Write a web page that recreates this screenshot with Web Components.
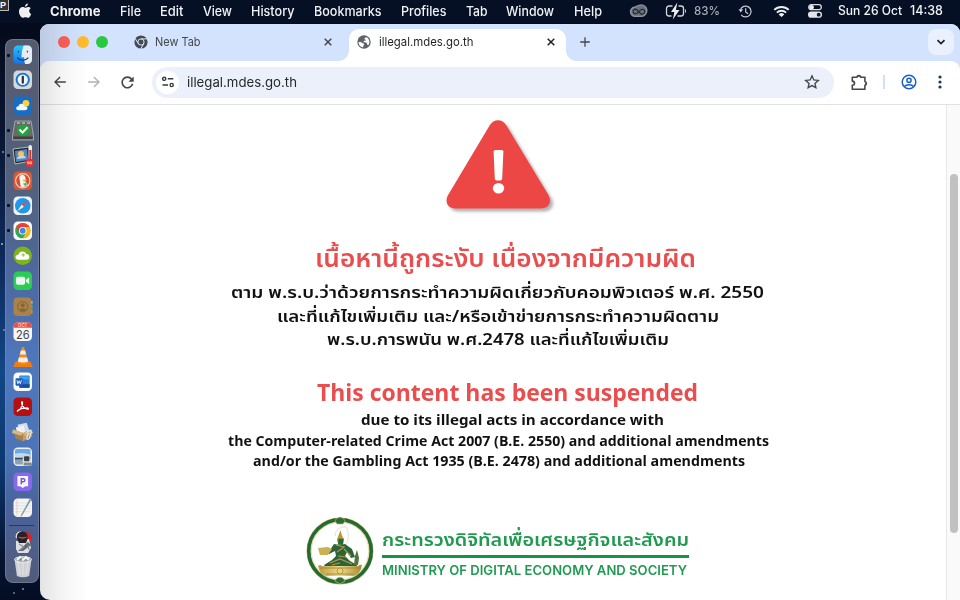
<!DOCTYPE html>
<html lang="en">
<head>
<meta charset="utf-8">
<title>illegal.mdes.go.th</title>
<style>
html,body{margin:0;height:600px;overflow:hidden}
body{font-family:Inter,"Liberation Sans",sans-serif;background:#030b1f}
</style>
</head>
<body>
<desktop-screen></desktop-screen>
<script>
const define=(name,html,setup)=>{
  customElements.define(name,class extends HTMLElement{
    constructor(){
      super();
      const t=document.createElement('template');
      t.innerHTML=html;
      this.attachShadow({mode:'open'}).append(t.content.cloneNode(true));
    }
    connectedCallback(){ if(setup) setup.call(this,this.shadowRoot); }
  });
};

/* Single line of text, condensed or widened to the width in its "w" attribute */
define('fit-text',`<style>
:host{display:block;flex:none;white-space:nowrap}
span{display:inline-block;transform-origin:0 50%;white-space:nowrap}
</style><span><slot></slot></span>`,function(r){
  const w=+this.getAttribute('w'), s=r.querySelector('span');
  this.style.width=w+'px';
  s.style.transform='none';
  const n=s.getBoundingClientRect().width;
  if(n) s.style.transform='scaleX('+(w/n)+')';
});

const tile=(fill)=>`<rect x=".5" y=".5" width="19" height="19" rx="4.4" fill="${fill}"/>`;
const ICONS={
apple:['0 0 14 17','<path fill="#eee" d="M9.9.5c.1 1.6-1.3 3.2-2.9 3.3C6.900 2.200 8.300.7 9.900.5zM7.200 4.700c.8 0 1.700-.8 3-.8 1 0 2 .5 2.600 1.400-2.300 1.400-1.900 4.600.4 5.600-.6 1.700-1.700 3.900-3.100 3.900-1 0-1.400-.6-2.600-.6-1.200 0-1.700.6-2.600.6C3 14.800 1 11.600 1 8.600 1 5.600 2.800 4 4.600 4c1.100 0 1.900.7 2.600.7z"/>'],
cc:['0 0 20 16','<g fill="none" stroke="#8d929b" stroke-width="1.500"><path d="M10.500 1.500a6 6 0 0 1 7.900 7.700c-1 3-3 4-5.500 4H6a5 5 0 0 1-3-8.500c1.300-1.200 2.400-1.300 3.500-1.200A6 6 0 0 1 10.500 1.500z" fill="#6a7079"/><path stroke="#1b2335" stroke-width="1.100" d="M13 11 8.200 6.300C6 4.300 3.300 6.500 4.500 9c1 2 3.300 1.500 4.500.5l3-2.900C15 4 18 7 16 9.800c-1.400 1.500-3 1.200-4 .2L7.500 5.700"/></g>'],
battery:['0 0 22 18','<path d="M7.500 4H4a2.500 2.500 0 0 0-2.500 2.500v5A2.500 2.500 0 0 0 4 14h2.500M13.500 4H16a2.500 2.500 0 0 1 2.500 2.500v5A2.500 2.500 0 0 1 16 14h-3.500" fill="none" stroke="#d5d7db" stroke-width="1.300"/><path d="M20 7v4c1.300-.4 1.300-3.600 0-4z" fill="#d5d7db"/><path d="M12.300.5 6 10h3.400L7.800 17.500 14.500 8h-3.600z" fill="#eee"/>'],
time:['0 0 16 16','<g fill="none" stroke="#c7cad0" stroke-width="1.300"><path d="M2.700 6A5.800 5.800 0 1 1 3.500 11.500M8.200 4.500V8.500l2.500 2"/></g><path d="M.5 5.500h5L3 9z" fill="#c7cad0"/>'],
wifi:['0 0 18 14','<g fill="none" stroke="#eee" stroke-width="2"><path d="M1.200 5.300a11.200 11.200 0 0 1 15.600 0M4 8.200a7.200 7.200 0 0 1 10 0"/></g><path d="M9 13 6 10.100a4.400 4.400 0 0 1 6 0z" fill="#eee"/>'],
control:['0 0 14 14','<rect x=".7" y=".7" width="12.600" height="5" rx="2.500" fill="none" stroke="#d9dbdf" stroke-width="1.300"/><circle cx="3.600" cy="3.200" r="2.300" fill="#eee"/><rect x="0" y="7.500" width="14" height="6.300" rx="3.100" fill="#e4e5e8"/><circle cx="10.700" cy="10.650" r="1.900" fill="#071127"/>'],
chromegrey:['0 0 14 14','<circle cx="7" cy="7" r="6.600" fill="#474a50"/><g stroke="#d3e3fd" stroke-width="1" fill="none"><circle cx="7" cy="7" r="3.100"/><path d="M7 3.900h6.500M4.200 8.600 1 3.100M9.800 8.600 6.700 14"/></g><circle cx="7" cy="7" r="1.800" fill="#474a50"/>'],
globe:['0 0 14 14','<circle cx="7" cy="7" r="6.700" fill="#5f6368"/><path fill="#fff" d="M1.500 7c1.300-.2 3.200.1 3.800 1 .4.700 1.700.3 1.900 1.300.1 1-1 1.200-1 2.100v1A5.600 5.600 0 0 1 1.500 7zM9.200 1.900c-.1.900-1.600.8-1.800 1.500-.2.900 1.500 1 1.300 1.900-.1.800-2 .3-2.200 1.300-.1.900 1.300.8 2.500.8 1 0 1 1.200 1.200 2.100l1 .9A5.500 5.500 0 0 0 9.200 1.900z"/>'],
x:['0 0 10 10','<path d="m1.700 1.700 6.600 6.600m0-6.600-6.600 6.600" stroke="currentColor" stroke-width="1.500" fill="none"/>'],
plus:['0 0 10 10','<path d="M5 .2v9.600M.2 5h9.600" stroke="#44474c" stroke-width="1.300"/>'],
chev:['0 0 10 10','<path d="m1.500 3.200 3.500 3.300 3.500-3.300" stroke="#202124" stroke-width="1.700" fill="none"/>'],
back:['0 0 12 12','<path d="M11.800 6H1M6.100.9 1 6l5.100 5.100" stroke="currentColor" stroke-width="1.400" fill="none"/>'],
reload:['0 0 12 12','<path d="M10.700 7.100A4.900 4.900 0 1 1 9.800 2.900L11 4.300" stroke="#44474c" stroke-width="1.500" fill="none"/><path d="M11.700.4v4.800H6.900z" fill="#44474c"/>'],
tune:['0 0 14 12','<g fill="none" stroke="#36393e" stroke-width="1.400"><circle cx="3.200" cy="2.800" r="1.600"/><path d="M6.800 2.800h5.500M1.500 9h5.500"/><circle cx="10.700" cy="9" r="1.600"/></g>'],
star:['0 0 14 14','<path d="m7 1.600 1.600 3.600 3.900.4-2.900 2.600.8 3.800L7 10.100 3.600 12l.8-3.800-2.900-2.600 3.900-.4z" fill="none" stroke="#44474c" stroke-width="1.200"/>'],
puzzle:['0 0 16 16','<path d="M1.200 3.100h4.500a1.700 1.700 0 0 1 3.400 0h4v4a1.800 1.800 0 0 1 0 3.500v3.800H1.200v-3.800c2.800-.3 2.800-3.600 0-3.900z" fill="none" stroke="#44474c" stroke-width="1.500" stroke-linejoin="round"/><path d="M5.900 2.500a1.600 1.600 0 0 1 3 0zM13.500 7.500a1.500 1.500 0 0 1 0 2.800z" fill="#44474c"/>'],
user:['0 0 16 16','<g fill="none" stroke="#1a5fd0" stroke-width="1.500"><circle cx="8" cy="8" r="6.800"/><circle cx="8" cy="6.300" r="2.100"/><path d="M3.300 12.500c2.100-2.400 7.300-2.400 9.400 0"/></g>'],
more:['0 0 4 14','<g fill="#1c3764"><circle cx="2" cy="2" r="1.600"/><circle cx="2" cy="7" r="1.600"/><circle cx="2" cy="12" r="1.600"/></g>'],
warn:['0 0 116 100','<defs><filter id="s" x="-20%" y="-20%" width="150%" height="150%"><feDropShadow dx="3" dy="3" stdDeviation="1.800" flood-color="#555" flood-opacity=".45"/></filter></defs><path filter="url(#s)" fill="#ec4645" d="M45.600 8.500c4-7 12.800-7 16.800 0l41.700 69c4.300 7 .8 14-7 14H11.400c-7.800 0-11.300-7-7-14z"/><path fill="#fff" d="M49.600 34.500q.1-1.500 1.600-1.500h6.600q1.500 0 1.600 1.500l-1.200 27q-.1 1.900-1.900 1.900h-3.600q-1.800 0-1.900-1.900z"/><ellipse cx="54.500" cy="71.300" rx="5.700" ry="5.300" fill="#fff"/>'],
seal:['0 0 68 68','<defs><linearGradient id="g" x1="0" x2="1"><stop stop-color="#b89b3f"/><stop offset=".5" stop-color="#f0dc87"/><stop offset="1" stop-color="#a78a35"/></linearGradient></defs><circle cx="34" cy="34" r="31.300" fill="#fff" stroke="#cdbb73" stroke-width="4.400"/><circle cx="34" cy="34" r="31.300" fill="none" stroke="#226b35" stroke-width="3.500"/><circle cx="34" cy="34" r="28.700" fill="none" stroke="#d5c98f" stroke-width=".6"/><path d="M29 4c1-3 3-3 5-4 2 1 4 1 5 4l-2 3h-6z" fill="#2c6d35" stroke="#cdbb73" stroke-width=".6"/><path d="M29 64c2-5 8-5 10 0l-5 3z" fill="#286c35" stroke="#cdbb73" stroke-width=".7"/><path d="M29 19c0-6 6-10 11-9 3 5 3 12 0 18" fill="none" stroke="#d7d5c8" stroke-width=".8"/><path d="m34.500 13 1.600 6 2 3-1 5-4.500 1-1.800-5z" fill="#b69a3b"/><path d="m32.500 21.500 5 .5-.5 6-5-.5z" fill="#28683b"/><path d="m28 27 6 1 5-1 7 5 3 8-4 1-4-6-2 4 5 5 7 4-2 4H21l-3-4 8-5 4-4-1-5-6 3-5-2 6-2z" fill="#2b643b"/><path d="m12 31 10-1 4 2-4 6h-8z" fill="#ccb054"/><path d="m30 28 8 2-7 5m1 4 8 1m-16 6 10-4 12 5m-20 1 8-2m4-14 7 7" stroke="#b3983f" stroke-width="1.200" fill="none"/><path d="M12 49q2-2 4 0l36 0q2-2 4-1l-1 4q-3 6-7 7H20q-5-1-7-7z" fill="url(#g)"/><path d="m14 51 40 0M20 57h28" stroke="#9e8230" stroke-width=".8"/><circle cx="34" cy="54" r="3" fill="#ead57c" stroke="#9e8230" stroke-width=".7"/><path d="m49 39 2-6 2 8-1 7h-4z" fill="#56713b"/>'],
finder:['0 0 20 20','<defs><linearGradient id="f" y2="1" x2="0"><stop stop-color="#25c4fb"/><stop offset="1" stop-color="#1570ee"/></linearGradient></defs>'+tile('url(#f)')+'<path d="M11 .5h4.100a4.400 4.400 0 0 1 4.400 4.400v10.200a4.400 4.400 0 0 1-4.400 4.400H12.400c-.7-2-.9-4-.9-7H8.700C8.700 8 9.500 4 11 .5z" fill="#e6edf5"/><path d="M4.300 13c3 3.600 8.500 3.600 11.500 0M5.500 5.800v2M14.700 5.800v2" stroke="#17375e" fill="none" stroke-width="1.100"/>'],
onepass:['0 0 20 20',tile('#d8d8d6')+'<circle cx="10" cy="10" r="6.300" fill="#f3f5f6" stroke="#1977cc" stroke-width="2"/><rect x="8.900" y="6" width="2.300" height="8" rx=".8" fill="#263443"/>'],
weather:['0 0 20 20',tile('#166dc5')+'<circle cx="13.300" cy="7.500" r="3.500" fill="#ffd13a"/><path d="M5.500 14.500c-3 0-3-4 .2-4 .6-3.400 5-3.400 6 0 4-.5 4 4 .8 4z" fill="#f3f8fd"/>'],
seo:['0 0 22 22','<path d="M3 2h16l2.500 15v4h-21v-4z" fill="#686a68" stroke="#bfc1ba" stroke-width=".7"/><rect x="1.200" y="17.500" width="19.500" height="2.500" fill="#40413f"/><path d="M5 4h3m2 0h3m2 0h3" stroke="#ddd" stroke-width="1.200"/><ellipse cx="11.300" cy="11" rx="6.500" ry="5.800" fill="#22a43d"/><path d="m7.500 10.500 3 3 5-5.300" fill="none" stroke="#fff" stroke-width="2"/>'],
temp:['0 0 22 22','<path d="m1 4 16-2 2 14-16 3z" fill="#202833" stroke="#b9b9b5" stroke-width="1"/><path d="m3 6 12-2 1 11-12 2z" fill="#5686c0"/><circle cx="9" cy="9" r="3" fill="#f5c34e"/><path d="M5 14c0-4 8-5 9-1z" fill="#ccd6e2"/><rect x="16.500" width="3.500" height="16" rx="1.700" fill="#eee"/><path d="M18.300 5v12" stroke="#e12d28" stroke-width="2"/><circle cx="17.800" cy="17.800" r="4.200" fill="#eb302c"/><path d="M15.600 16.800v2h1.500v-2zM18 16.800v2h1.500v-2z" fill="none" stroke="#fff" stroke-width=".6"/>'],
duck:['0 0 20 20',tile('#dc5734')+'<circle cx="10" cy="10" r="7.300" fill="#d84d2b" stroke="#f3d4ca" stroke-width="1.100"/><path d="M8 17 6.500 7C6.500 2.500 13 3 13 8l-.5 3c2.500 1 2.500 3 2 4.500z" fill="#f5f4ef"/><path d="m10 8.500 5 .7-4 2z" fill="#f7b82e"/><path d="m10 13 4-1-.3 4z" fill="#4da65a"/>'],
safari:['0 0 20 20',tile('#eff3f6')+'<circle cx="10" cy="10" r="8" fill="#2396e9"/><path d="m15.700 4.300-4.600 6.800-2.200-2.200z" fill="#e84c43"/><path d="m4.300 15.700 4.600-6.800 2.200 2.200z" fill="#f7f7f7"/>'],
chrome:['0 0 20 20',tile('#f8f8f8')+'<circle cx="10" cy="10" r="7.800" fill="#33a852"/><path d="M10 10 3.200 6.100A7.800 7.800 0 0 1 16.800 6.100z" fill="#ea4335"/><path d="M10 6.100h6.800A7.800 7.800 0 0 1 10 17.800l3.400-5.800z" fill="#fbbc05"/><path d="m3.200 6.100 3.500 6L10 10V6z" fill="#ea4335"/><circle cx="10" cy="10" r="3.900" fill="#fff"/><circle cx="10" cy="10" r="3" fill="#4285f4"/>'],
cloud:['0 0 20 20','<circle cx="10" cy="10" r="9.500" fill="#79b51b"/><path d="M5.500 14c-4 0-3.700-5 0-5 1-4 6.500-4.400 8-.8 4-.5 4.600 5.800.5 5.800z" fill="#fff"/><path d="M10.500 7.500v3.500M8.700 9.200h3.600" stroke="#79b51b" stroke-width=".8"/>'],
facetime:['0 0 20 20',tile('#2ccb55')+'<rect x="3" y="6" width="9.500" height="8" rx="2" fill="#eafaee"/><path d="m13.300 9 3.300-2.500v7L13.300 11z" fill="#eafaee"/>'],
contacts:['0 0 20 20','<path d="M18 4h2v3h-2z" fill="#d8c56c"/><path d="M18 8h2v4h-2z" fill="#5fb069"/><path d="M18 13h2v4h-2z" fill="#e28b4a"/><rect x=".5" y=".5" width="18.500" height="19" rx="4" fill="#a9824c"/><circle cx="10" cy="10" r="5.300" fill="none" stroke="#876435" stroke-width="1"/><circle cx="10" cy="8.500" r="2" fill="#876435"/><path d="M6.500 13q3.500-3 7 0-3 3-7 0z" fill="#876435"/>'],
calendar:['0 0 20 20',tile('#f7f7f7')+'<path d="M.5 6V4.900A4.400 4.400 0 0 1 4.900.5h10.200a4.400 4.400 0 0 1 4.400 4.400V6z" fill="#ed4b43"/><text x="10" y="5" text-anchor="middle" font-size="4.500" fill="#fff" font-family="Inter">OCT</text><text x="10" y="17" text-anchor="middle" font-size="12" fill="#444" font-family="Inter" textLength="14" lengthAdjust="spacingAndGlyphs">26</text>'],
vlc:['0 0 20 22','<path d="m2.500 15.500 15 0 2.200 5.500H.3z" fill="#ef7d0c"/><path d="M9 1h2l4.700 16q-5.700 3-11.400 0z" fill="#fa8b12"/><path d="m7.900 4.500h4.200l1.100 4H6.800zM5.900 11.500h8.200l1.100 4q-5 2-10.400 0z" fill="#eee"/>'],
word:['0 0 20 20',tile('#fafafa')+'<rect x="6.500" y="3.500" width="10.500" height="13" rx="1" fill="#2c7cd5"/><path d="M6.500 4.500h10.500v3H6.500z" fill="#41a5ee"/><path d="M6.500 12.500h10.500v3.500H6.500z" fill="#174b98"/><rect x="2.600" y="6.500" width="7.500" height="7.500" rx=".8" fill="#1b5fbb"/><path d="m4 8.500 1 3.500 1.300-3 1.200 3L8.700 8.500" fill="none" stroke="#fff" stroke-width=".9"/>'],
acrobat:['0 0 20 20',tile('#b60f12')+'<path d="M4.600 14.500c2.500-.8 5.600-5.500 5.200-8.600-.1-1.700-1.300-1.200-1 .3.500 3 3.100 6 5.800 6.300 2.300.1 1.300-1.600-.9-1.400-3.500.1-7 1.200-9 2.700z" fill="none" stroke="#fff" stroke-width="1.200"/>'],
box:['0 0 24 22','<path d="m6 3 10-2 3 9-10 3z" fill="#cfe0ed"/><path d="m4 6 9-2 1 8-8 1z" fill="#f0f2f1"/><path d="m1 8 11 4v9L4 18z" fill="#a8814c"/><path d="m12 12 9-4 1 8-10 5z" fill="#c4a069"/><path d="m1 8-1 4 10 3 2-3zM12 12l9-4 2 4-8 4z" fill="#d3b784"/><path d="M16 12q4-5 5-1l-2 7q-2 2-3 0l2-6" fill="none" stroke="#e6eaed" stroke-width="1.200"/>'],
preview:['0 0 20 20',tile('#edf1f4')+'<path d="M2 4q0-2 2-2h12q2 0 2 2v8H2z" fill="#6daae4"/><path d="M2 7q8-2 16 1v4H2z" fill="#c5d9ec"/><path d="M2 11h16v2H2z" fill="#34455f"/><path d="M2 13h9v5H4q-2 0-2-2z" fill="#8fa0b4"/><path d="M10 11h8l1 8h-9z" fill="#dce0df"/><rect x="11.300" y="9.500" width="5.500" height="5" rx="1" fill="#3c3f42"/><path d="M11 16h8v3h-8z" fill="#868a8c"/>'],
pock:['0 0 20 20',tile('#8669ed')+'<path d="M4.500 4h11v10.500h-2.800L10 16.500l-2.700-2H4.500z" fill="#f7f5ff"/><path d="M8.500 12.500V7h2.200q1.500.2 1.500 1.500t-1.500 1.600H8.500" fill="none" stroke="#7257d8" stroke-width="1.500"/>'],
textedit:['0 0 20 20',tile('#f4f4f1')+'<path d="M2 5h16M2 8h16M2 11h16M2 14h16" stroke="#d5dbe1" stroke-width=".7"/><path d="M4 2v16" stroke="#edb6b5" stroke-width=".6"/><path d="M17.500.5 8.300 17.500l-.5 1.500 1.400-.9L18.800 1.500z" fill="#69808e" stroke="#b8c9d1" stroke-width=".5"/>'],
robot:['0 0 20 22','<ellipse cx="12" cy="7" rx="7" ry="6.500" fill="#d72525"/><path d="m3 10 13-2 2 9-3 5H5l-2-4z" fill="#dddfe1"/><path d="M2.500 6Q3 0 8 .5l1 1L5 9z" fill="#e8e8ea"/><path d="M4 8q-1-7 5-7.500Q15 0 14.500 8L13 12H6z" fill="#232329"/><path d="M5.500 6q4 2 8 0" stroke="#e24a45" stroke-width="1.300" fill="none"/><path d="m5 20 10-9 3 3-8 6z" fill="#61656c"/><path d="m6 13 5 3-4 3m8-5 1 5" stroke="#888d95" stroke-width="1.200" fill="none"/>'],
trash:['0 0 20 22','<path d="M1.500 3h17L16.200 20q-6 2.500-12.300 0z" fill="#cfd1d4"/><path d="M5 6l2 13m3-12v12m5-13-2 13" stroke="#dfe1e3" stroke-width="1.200"/><ellipse cx="10" cy="3.500" rx="8.500" ry="2.800" fill="#9b9fa3" stroke="#edf0f1" stroke-width="1"/><path d="m4 4 3-3 3 3 3-3 3 3" stroke="#f5f6f5" stroke-width="1.800" fill="none"/><circle cx="8" cy="3" r="1" fill="#459574"/>']
};
define('ui-icon',`<style>:host{display:block;flex:none}svg{display:block;width:100%;height:100%;overflow:visible}</style>`,function(r){
  if(r.querySelector('svg')) return;
  const [vb,body]=ICONS[this.getAttribute('name')];
  this.style.width=this.getAttribute('w')+'px';
  this.style.height=this.getAttribute('h')+'px';
  const t=document.createElement('template');
  t.innerHTML=`<svg viewBox="${vb}">${body}</svg>`;
  r.append(t.content);
});

define('menu-bar',`<style>
:host{display:flex;align-items:center;height:23px;background:#051025;color:#f1f2f4;font:500 13px/22px Inter,"Liberation Sans",sans-serif;box-sizing:border-box;padding:0 17px 1px 0}
.p{align-self:flex-start;width:8px;height:10px;border:1px solid #bbb;border-left:0;border-top:0;background:#333;color:#fff;font:700 9px/10px "Liberation Sans";margin-right:9px}
nav{display:flex;gap:19.300px;margin-left:18px}
b{font-weight:700}
.status{display:flex;align-items:center;margin-left:auto}
</style>
<span class="p">P</span><ui-icon name="apple" w="14" h="17"></ui-icon>
<nav><fit-text w="50.500"><b>Chrome</b></fit-text><fit-text w="21">File</fit-text><fit-text w="23.500">Edit</fit-text><fit-text w="29">View</fit-text><fit-text w="43.500">History</fit-text><fit-text w="67.500">Bookmarks</fit-text><fit-text w="45.500">Profiles</fit-text><fit-text w="21.500">Tab</fit-text><fit-text w="48">Window</fit-text><fit-text w="28">Help</fit-text></nav>
<div class="status">
<ui-icon name="cc" w="19" h="15"></ui-icon>
<ui-icon name="battery" w="22" h="18" style="margin-left:17px"></ui-icon>
<fit-text w="26" style="margin-left:6.500px;color:#a9adb5;font-size:12px">83%</fit-text>
<ui-icon name="time" w="15" h="15" style="margin-left:18px"></ui-icon>
<ui-icon name="wifi" w="17" h="13" style="margin-left:20.500px"></ui-icon>
<ui-icon name="control" w="14" h="14" style="margin-left:17.500px"></ui-icon>
<fit-text w="64" style="margin-left:16.500px;font-size:12.500px">Sun 26 Oct</fit-text>
<fit-text w="33" style="margin-left:8px;font-size:12.500px">14:38</fit-text>
</div>`);

define('dock-item',`<style>
:host{display:grid;grid-template-columns:5px 1fr 3px;align-items:center;height:25.130px;flex:none}
i{width:3px;height:3px;border-radius:1px;margin-left:1px}
:host([on]) i{background:#0a1020}
.c{display:grid;place-items:center}
</style><i></i><div class="c"></div>`,function(r){
  const big=this.hasAttribute('big');
  r.querySelector('.c').innerHTML=`<ui-icon name="${this.getAttribute('name')}" w="${big?22:19.500}" h="${big?22:19.500}"></ui-icon>`;
});

define('app-dock',`<style>
:host{display:flex;flex-direction:column;box-sizing:border-box;width:33.500px;height:544px;padding:2.500px 0 0 0;margin:16px 0 0 5px;border:1px solid #8089a299;border-radius:8px;background:linear-gradient(#555b6e 0,#52617f 28%,#4c6ca8 48%,#4e78bd 60%,#4c74b6 76%,#49639b 86%,#525b7a 100%)}
hr{width:25px;height:1px;border:0;background:#243a66;margin:5.500px auto 3px}
</style>`,function(r){
  for(const s of 'finder* onepass weather seo*+ temp*+ duck safari* chrome* cloud facetime contacts calendar vlc+ word acrobat box+ preview pock textedit - robot+ trash+'.split(' ')){
    if(s==='-'){r.append(document.createElement('hr'));continue}
    const e=document.createElement('dock-item');
    e.setAttribute('name',s.replace(/[*+]/g,''));
    if(s.includes('*'))e.setAttribute('on','');
    if(s.includes('+'))e.setAttribute('big','');
    r.append(e);
  }
});

define('tab-strip',`<style>
:host{display:flex;align-items:flex-end;height:37px;background:#d3e3fd;color:#45484d;font:12px/16px Inter,sans-serif}
.lights{display:flex;gap:7px;align-self:center;margin:0 0 1px 18.500px}
.lights i{width:12px;height:12px;border-radius:50%}
.tab{display:flex;align-items:center;height:26px;padding-bottom:6px;box-sizing:content-box}
.idle{width:199px;margin-left:25.500px}
.act{position:relative;width:217px;margin-left:16.500px;background:#fff;border-radius:10px 10px 0 0;color:#1f2024}
.act::before,.act::after{content:"";position:absolute;bottom:0;width:10px;height:10px}
.act::before{left:-10px;background:radial-gradient(circle at 0 0,#0000 9.500px,#fff 10px)}
.act::after{right:-10px;background:radial-gradient(circle at 100% 0,#0000 9.500px,#fff 10px)}
.x{margin-left:auto}
.plus{margin:0 0 14px 14px}
.menu{display:grid;place-items:center;width:26px;height:26px;border-radius:8px;background:#eaf0fd;margin:0 6px 6px auto}
</style>
<div class="lights"><i style="background:#fe5f57"></i><i style="background:#febc2e"></i><i style="background:#28c840"></i></div>
<div class="tab idle"><ui-icon name="chromegrey" w="14" h="14"></ui-icon><fit-text w="45.500" style="margin-left:7.500px">New Tab</fit-text><ui-icon class="x" name="x" w="10" h="10"></ui-icon></div>
<div class="tab act"><ui-icon name="globe" w="14" h="14" style="margin-left:7.500px"></ui-icon><fit-text w="94.500" style="margin-left:8px">illegal.mdes.go.th</fit-text><ui-icon class="x" name="x" w="10" h="10" style="margin-right:10px"></ui-icon></div>
<ui-icon class="plus" name="plus" w="10" h="10"></ui-icon>
<div class="menu"><ui-icon name="chev" w="10" h="10"></ui-icon></div>`);

define('tool-bar',`<style>
:host{display:flex;align-items:center;height:42px;padding-bottom:1px;border-bottom:1px solid #dfe1e3;background:#fff;border-radius:9px 9px 0 0;box-sizing:content-box;color:#45484d;font:13px/18px Inter,sans-serif}
.url{display:flex;align-items:center;width:682px;height:31px;border-radius:16px;background:#ecf0fa;margin-left:18.500px;color:#26282c}
.site{display:grid;place-items:center;width:23px;height:23px;border-radius:50%;background:#fff;margin-left:4px}
.bar{width:2px;height:14px;background:#cfe0fb}
</style>
<ui-icon name="back" w="12" h="12" style="margin-left:14.500px"></ui-icon>
<ui-icon name="back" w="12" h="12" style="margin-left:21.500px;transform:scaleX(-1);color:#b0b2b6"></ui-icon>
<ui-icon name="reload" w="13" h="13" style="margin-left:21px"></ui-icon>
<div class="url"><span class="site"><ui-icon name="tune" w="14" h="12"></ui-icon></span><fit-text w="110" style="margin-left:7.500px">illegal.mdes.go.th</fit-text><ui-icon name="star" w="16" h="16" style="margin:0 14px 0 auto"></ui-icon></div>
<ui-icon name="puzzle" w="17" h="17" style="margin-left:17px"></ui-icon><span class="bar" style="margin-left:15px"></span>
<ui-icon name="user" w="16" h="16" style="margin-left:16px"></ui-icon>
<ui-icon name="more" w="4" h="14" style="margin-left:21px"></ui-icon>`);

define('block-notice',`<style>
:host{display:flex;flex-direction:column;align-items:center;width:541px;margin-left:188.500px;color:#111;font-family:"Noto Sans Thai","Noto Sans",sans-serif;font-weight:600}
fit-text{display:block}
.red{color:#ea4d4e}
.th{font-size:16.500px;line-height:23.600px;height:23.600px;margin-left:-2px}
.en{font-size:14px;line-height:20px;height:20.200px;font-weight:700}
footer{display:flex;align-items:flex-start;gap:8px;margin:45.500px 0 0 -3px;color:#1f9a50}
.rule{height:3px;width:307px;background:#159447}
</style>
<ui-icon name="warn" w="116" h="100" style="margin:12px 0 0 7px"></ui-icon>
<fit-text class="red" w="381" style="font-size:24.500px;line-height:36px;height:36px;margin-top:25.300px;margin-left:13px">เนื้อหานี้ถูกระงับ เนื่องจากมีความผิด</fit-text>
<fit-text class="th" w="533" style="margin-top:3px">ตาม พ.ร.บ.ว่าด้วยการกระทำความผิดเกี่ยวกับคอมพิวเตอร์ พ.ศ. 2550</fit-text>
<fit-text class="th" w="442">และที่แก้ไขเพิ่มเติม และ/หรือเข้าข่ายการกระทำความผิดตาม</fit-text>
<fit-text class="th" w="342">พ.ร.บ.การพนัน พ.ศ.2478 และที่แก้ไขเพิ่มเติม</fit-text>
<fit-text class="red" w="381" style="font-size:22.500px;font-weight:700;line-height:32px;height:32px;margin-top:25.800px;margin-left:18px">This content has been suspended</fit-text>
<fit-text class="en" w="303" style="margin-top:1.500px;margin-left:28px">due to its illegal acts in accordance with</fit-text>
<fit-text class="en" w="541">the Computer-related Crime Act 2007 (B.E. 2550) and additional amendments</fit-text>
<fit-text class="en" w="492">and/or the Gambling Act 1935 (B.E. 2478) and additional amendments</fit-text>
<footer><ui-icon name="seal" w="68" h="68"></ui-icon><div style="padding-top:9.500px">
<fit-text w="307" style="font-size:18.500px;line-height:27px;height:28px">กระทรวงดิจิทัลเพื่อเศรษฐกิจและสังคม</fit-text>
<div class="rule"></div>
<fit-text w="305" style="font:600 13.500px/25px Inter,sans-serif">MINISTRY OF DIGITAL ECONOMY AND SOCIETY</fit-text>
</div></footer>`);

define('scroll-track',`<style>
:host{display:block;box-sizing:border-box;width:14px;height:100%;border-left:1px solid #e8e8e8;background:#fafafa;padding:69px 2px 0 3px}
div{width:7.500px;height:359px;border-radius:4px;background:#c1c1c1}
</style><div></div>`);

define('browser-window',`<style>
:host{display:flex;flex-direction:column;position:relative;width:920.500px;height:575.500px;margin-top:1px;border-radius:9px 9px 0 10px;background:#fff;overflow:hidden}
.page{display:flex;flex:1;min-height:0;justify-content:space-between;overflow:hidden}
:host::after{content:"";position:absolute;inset:0 auto 0 0;width:48px;background:linear-gradient(90deg,#0000001c,#0000000b 45%,#0000);pointer-events:none}
.strip{background:#d3e3fd}
</style>
<tab-strip></tab-strip><div class="strip"><tool-bar></tool-bar></div>
<div class="page"><block-notice></block-notice><scroll-track></scroll-track></div>`);

define('desktop-screen',`<style>
:host{display:block;width:960px;height:600px;overflow:hidden;background:radial-gradient(circle at 3px 152px,#68758c 0 1px,#0000 1.500px),radial-gradient(circle at 2px 244px,#8292ad 0 1px,#0000 1.500px),radial-gradient(circle at 4px 330px,#5a7ba5 0 1px,#0000 1.500px),radial-gradient(circle at 14px 593px,#526078 0 1px,#0000 1.500px),radial-gradient(circle at 23px 589px,#68758c 0 1px,#0000 1.500px),linear-gradient(#030817 0,#0a1631 22%,#0e2d61 46%,#124785 62%,#0c366f 78%,#051534 92%,#040d23 100%)}
main{display:flex;justify-content:space-between;align-items:flex-start}
</style>
<menu-bar></menu-bar><main><app-dock></app-dock><browser-window></browser-window></main>`);
</script>
</body>
</html>
